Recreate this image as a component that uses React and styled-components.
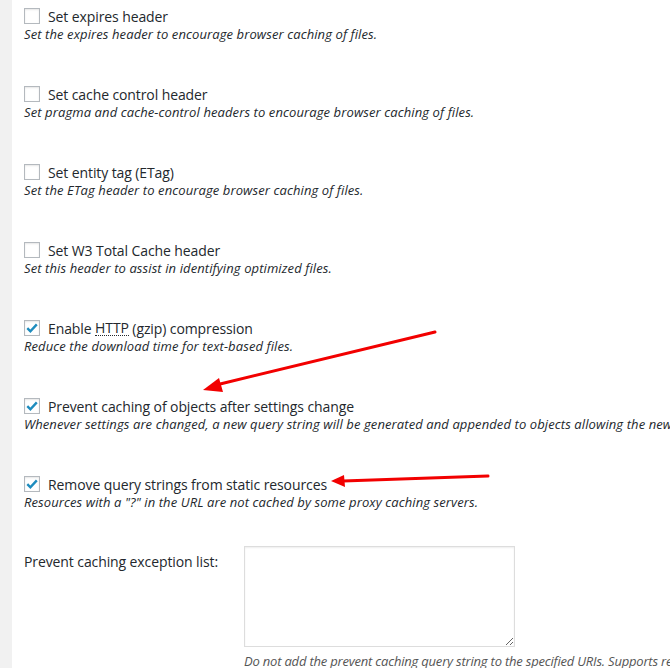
import React from "react";
import styled, { createGlobalStyle } from "styled-components";

const Global = createGlobalStyle`
  html, body { margin: 0; padding: 0; background: #fff; }
  body { font-family: "Open Sans", "Noto Sans", sans-serif; color: #23282d; }
`;

const Page = styled.div`
  position: relative;
  display: flex;
  width: 670px;
  height: 668px;
  overflow: hidden;
`;

const Sidebar = styled.div`
  flex: 0 0 12px;
  background: #f1f1f1;
`;

const Content = styled.div`
  flex: 1;
  background: #fff;
  padding: 7px 0 0 12px;
  display: flex;
  flex-direction: column;
  white-space: nowrap;
  overflow: hidden;
`;

const Options = styled.div`
  display: flex;
  flex-direction: column;
  gap: 42px;
`;

const Option = styled.div`
  display: flex;
  flex-direction: column;
`;

const LabelLine = styled.label`
  display: flex;
  align-items: center;
  height: 18px;
  font-size: 14px;
  letter-spacing: -0.1px;
  color: #23282d;
`;

const Box = styled.span`
  flex: 0 0 auto;
  width: 14px;
  height: 14px;
  border: 1px solid #b4b9be;
  box-shadow: inset 0 1px 2px rgba(0, 0, 0, 0.1);
  background: #fff;
  margin-right: 8px;
  display: flex;
  align-items: center;
  justify-content: center;
`;

const Desc = styled.p`
  margin: 0;
  height: 18px;
  line-height: 18px;
  font-size: 13px;
  font-style: italic;
  letter-spacing: 0.1px;
  color: #23282d;
`;

const Abbr = styled.abbr`
  text-decoration: none;
  border-bottom: 1px dotted #23282d;
  line-height: 14px;
`;

const FieldRow = styled.div`
  display: grid;
  grid-template-columns: 220px auto;
  margin-top: 35px;
`;

const FieldLabel = styled.div`
  font-size: 14px;
  letter-spacing: -0.1px;
  padding-top: 7px;
  line-height: 18px;
`;

const FieldCol = styled.div`
  display: flex;
  flex-direction: column;
  gap: 5px;
`;

const Textarea = styled.textarea`
  width: 271px;
  height: 101px;
  box-sizing: border-box;
  border: 1px solid #ddd;
  box-shadow: inset 0 1px 2px rgba(0, 0, 0, 0.07);
  background: #fff;
  margin: 0;
  resize: both;
`;

const FieldDesc = styled.p`
  margin: 0;
  font-size: 13px;
  font-style: italic;
  letter-spacing: -0.2px;
  color: #555;
  line-height: 18px;
`;

const Overlay = styled.svg`
  position: absolute;
  left: 0;
  top: 0;
  pointer-events: none;
`;

const Check = () => (
  <svg width="14" height="14" viewBox="0 0 14 14">
    <path d="M2.3 7.2 L5.4 10.3 L11.8 3.4" fill="none" stroke="#1e8cbe" strokeWidth="2.4" />
  </svg>
);

const items = [
  { label: "Set expires header", desc: "Set the expires header to encourage browser caching of files." },
  { label: "Set cache control header", desc: "Set pragma and cache-control headers to encourage browser caching of files." },
  { label: "Set entity tag (ETag)", desc: "Set the ETag header to encourage browser caching of files." },
  { label: "Set W3 Total Cache header", desc: "Set this header to assist in identifying optimized files." },
  {
    label: (
      <>
        Enable&nbsp;<Abbr title="Hypertext Transfer Protocol">HTTP</Abbr>&nbsp;(gzip) compression
      </>
    ),
    desc: "Reduce the download time for text-based files.",
    checked: true,
  },
  {
    label: "Prevent caching of objects after settings change",
    desc: "Whenever settings are changed, a new query string will be generated and appended to objects allowing the new policy to be applied.",
    checked: true,
  },
  {
    label: "Remove query strings from static resources",
    desc: 'Resources with a "?" in the URL are not cached by some proxy caching servers.',
    checked: true,
  },
];

export default function App() {
  return (
    <>
      <Global />
      <Page>
        <Sidebar />
        <Content>
          <Options>
            {items.map((it, i) => (
              <Option key={i}>
                <LabelLine>
                  <Box>{it.checked && <Check />}</Box>
                  {it.label}
                </LabelLine>
                <Desc>{it.desc}</Desc>
              </Option>
            ))}
          </Options>
          <FieldRow>
            <FieldLabel>Prevent caching exception list:</FieldLabel>
            <FieldCol>
              <Textarea />
              <FieldDesc>
                Do not add the prevent caching query string to the specified URIs. Supports regular expressions.
              </FieldDesc>
            </FieldCol>
          </FieldRow>
        </Content>
        <Overlay width="670" height="668">
          <line x1="435" y1="332" x2="216" y2="385" stroke="#f20000" strokeWidth="3" strokeLinecap="round" />
          <polygon points="203,390 219,378 223,392" fill="#f20000" />
          <line x1="488" y1="476" x2="343" y2="481" stroke="#f20000" strokeWidth="3" strokeLinecap="round" />
          <polygon points="331,481 344,475 345,487" fill="#f20000" />
        </Overlay>
      </Page>
    </>
  );
}
